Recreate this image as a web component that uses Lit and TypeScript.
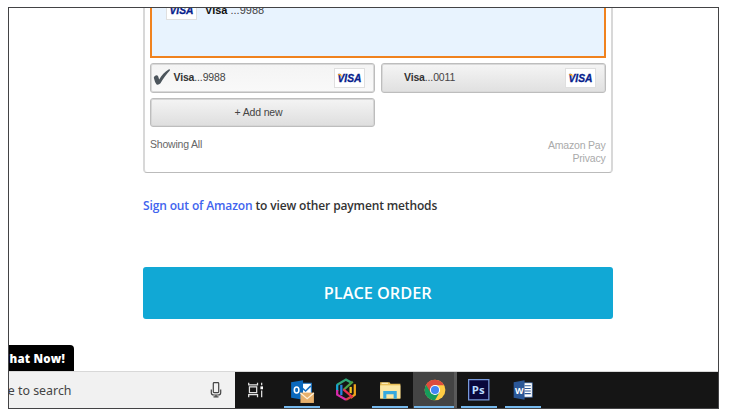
import { LitElement, html, svg, css } from "lit";
import { customElement, property } from "lit/decorators.js";

@customElement("visa-mark")
class VisaMark extends LitElement {
  static styles = css`
    :host { display: block; box-sizing: border-box; width: 31px; height: 20px; background: #fff; border: 1px solid #dfdfdf; }
    svg { display: block; width: 29px; height: 18px; }
    text { font: italic bold 11px "Liberation Sans", sans-serif; fill: #06218c; stroke: #06218c; stroke-width: .3px; }
  `;
  render() {
    return html`<svg viewBox="0 0 29 18">
      <text x="2.500" y="13" textLength="24" lengthAdjust="spacingAndGlyphs">VISA</text>
      <path d="M2.800 5h3.200l1.300 3.500Q6.300 6.500 2.800 5.600z" fill="#f5a31c" />
    </svg>`;
  }
}

@customElement("pay-option")
class PayOption extends LitElement {
  @property() number = "";
  @property({ type: Boolean, reflect: true }) selected = false;
  static styles = css`
    :host { box-sizing: border-box; display: flex; align-items: center; height: 29.500px; padding: 0 9px 0 2px; border: 1px solid #bdbdbd; border-radius: 3px; background: linear-gradient(#f5f5f5, #e0e0e0); box-shadow: inset 0 0 0 1px #d9d9d9; }
    :host([selected]) { background: linear-gradient(#f4f4f4, #f9f9f9); }
    .check { width: 18px; height: 17px; margin-right: 2.500px; }
    .label { flex: 1; font: 10.500px/14px "Liberation Sans", sans-serif; letter-spacing: -.15px; color: #444; padding-bottom: 1px; }
    b { color: #333; }
  `;
  render() {
    return html`
      <svg class="check" viewBox="0 0 18 18">
        ${this.selected
          ? svg`<path d="M.3 9.300Q.4 7.600 2.300 6.800q1.800-.6 2.700 1.100l1 3.200C8.500 7 12 3 16 .6q2-.7 1.300 1C13.500 5.500 10 10.500 7.400 15.200Q5.500 17 3.300 16.400 1.300 14 .3 9.300z" fill="#4c555c"/>`
          : ""}
      </svg>
      <span class="label"><b>Visa</b>...${this.number}</span>
      <visa-mark></visa-mark>`;
  }
}

const icons = {
  tasks: svg`<g fill="none" stroke="#e4e4e4" stroke-width="1.200"><path d="M5.500 6.500v2h8.500v-2M5.500 20.500v-2.500h8.500v2.500M6.200 10.500h7v5.500h-7zM18 6.500v2.500M18 14v6.500"/></g><path d="M16.800 10h2.500v2.800h-2.500z" fill="#fff"/>`,
  outlook: svg`<path d="M12 7h10.500v12H12z" fill="#fff" stroke="#1672c4"/><path d="m14 12 3 2.500 5-5" fill="none" stroke="#1672c4" stroke-width="1.500"/><path d="M3 6 14.500 4v19L3 21z" fill="#0b69bd"/><ellipse cx="8.300" cy="13.500" rx="2.200" ry="2.900" fill="none" stroke="#fff" stroke-width="1.500"/><path d="M12 16h13v10H12z" fill="#e7b06c"/><path d="m12 16.300 6.500 5.500 6.500-5.500" fill="none" stroke="#fff2da" stroke-width="1.200"/>`,
  k: svg`<g fill="none" stroke-width="2.200"><path d="M18 6 13.500 3.500 5 8.500" stroke="#31a878"/><path d="M5 8v6.500" stroke="#18a5d2"/><path d="M5 13.500V18l8.500 5" stroke="#d82bab"/><path d="M20 5.500 11 13.500" stroke="#4fa348"/><path d="M22 8V18l-4 3" stroke="#f0a51d"/><path d="m11 13 9 7.500" stroke="#e92f51"/><path d="M9 8.500v10" stroke="#2882de"/><path d="m13.500 23 5-3" stroke="#d94444"/><path d="M18 10.500v6" stroke="#f4c620"/></g>`,
  folder: svg`<path d="M4 6h9l1 1.500h9.500V22H4z" fill="#e9bf57"/><path d="M4 9h19.500v12.500H4z" fill="#fbe7a4"/><path d="M5.500 6.500h6v1h-6z" fill="#fff5d0"/><path d="M7 22v-7.500h13V22h-3v-4.500h-7V22z" fill="#36a9df"/>`,
  chrome: svg`<circle cx="13.500" cy="13.500" r="10" fill="#fc4"/><path d="M13.500 13.500 4.840 8.500A10 10 0 0 0 13.500 23.500l4.300-7.500z" fill="#169b5b"/><path d="M4.840 8.500A10 10 0 0 1 22.200 8.800H13.500l-4.300 7.200z" fill="#dc4c3e"/><circle cx="13.500" cy="13.500" r="4.900" fill="#fff"/><circle cx="13.500" cy="13.500" r="3.900" fill="#4285f4"/>`,
  ps: svg`<path d="M3.500 3.500h19.500v19.500H3.500z" fill="#09073c" stroke="#7899da" stroke-width="1.200"/><text x="6.500" y="17.300" class="ps">Ps</text>`,
  word: svg`<path d="M13 6.500h9.500v14H13z" fill="#fff" stroke="#2b5797" stroke-width=".7"/><path d="M15 9.500h6M15 12h6M15 14.500h6M15 17h6" stroke="#2b5797"/><path d="M4.500 6 15 4v19L4.500 21z" fill="#2b5797"/><text x="5.700" y="17" class="w">W</text>`,
};

@customElement("task-icon")
class TaskIcon extends LitElement {
  @property() icon: keyof typeof icons = "tasks";
  @property({ type: Boolean, reflect: true }) running = false;
  @property({ type: Boolean, reflect: true }) active = false;
  static styles = css`
    :host { display: flex; flex-direction: column; align-items: center; box-sizing: border-box; width: 44.300px; padding-top: 3.500px; }
    :host([active]) { background: linear-gradient(90deg, #444 41px, #5a5a5a 41px); }
    svg { width: 28px; height: 28px; flex: none; }
    .line { width: 36px; height: 2.500px; margin-top: 2px; }
    :host([running]) .line { background: #76b9ed; }
    :host([active]) .line { width: 40px; align-self: flex-start; margin-left: 1px; }
    .ps { font: bold 11px "Open Sans", sans-serif; fill: #b9daff; }
    .w { font: bold 8.500px "Open Sans", sans-serif; fill: #fff; }
  `;
  render() {
    return html`<svg viewBox="0 0 27 27">${icons[this.icon]}</svg><div class="line"></div>`;
  }
}

@customElement("app-root")
class AppRoot extends LitElement {
  static styles = css`
    :host { display: block; box-sizing: border-box; width: 729px; height: 418px; padding: 7px 0 0 8px; background: #fff; overflow: hidden; font-family: "Liberation Sans", sans-serif; }
    .frame { box-sizing: border-box; width: 711px; height: 402px; border: 1px solid #434345; overflow: hidden; display: flex; flex-direction: column; }
    .content { width: 469.500px; margin-left: 134px; height: 337px; flex: none; }
    .panel { box-sizing: border-box; height: 165px; padding: 0 5px; border: solid #d8d8d8; border-width: 0 2px 1px; border-bottom-color: #bbb; border-radius: 0 0 4px 4px; }
    .chosen { box-sizing: border-box; height: 50px; border: 2px solid #f0821e; border-top: 0; background: #e8f3fe; display: flex; align-items: flex-start; padding-left: 14px; overflow: hidden; }
    .chosen visa-mark { margin-top: -8px; }
    .chosen span { font-size: 11px; line-height: 14px; margin: -5px 0 0 8px; color: #444; }
    .chosen b { color: #111; }
    .options { display: grid; grid-template-columns: 225px 225px; column-gap: 5.500px; row-gap: 5px; margin-top: 5px; }
    .add { box-sizing: border-box; height: 29px; display: flex; align-items: center; justify-content: center; padding: 0 8px 0 0; border: 1px solid #bdbdbd; border-radius: 3px; background: linear-gradient(#f4f4f4, #dedede); box-shadow: inset 0 0 0 1px #d6d6d6; font-size: 10.500px; line-height: 13px; letter-spacing: -.15px; color: #444; }
    .foot { display: flex; justify-content: space-between; margin-top: 11px; font-size: 10.500px; letter-spacing: -.2px; line-height: 13.500px; color: #666; }
    .links { text-align: right; color: #aaa; padding-top: 1px; }
    .signout { margin-top: 23px; height: 20px; font: 600 12px/20px "Open Sans", sans-serif; letter-spacing: -.14px; color: #333; white-space: nowrap; }
    .signout a { color: #4164ee; }
    .order { margin-top: 51px; height: 52.400px; display: flex; align-items: center; justify-content: center; border-radius: 3px; background: #11a8d5; color: #fff; font: 600 16.300px "Open Sans", sans-serif; }
    .chat { box-sizing: border-box; flex: none; width: 65px; height: 27px; padding-right: 9px; display: flex; justify-content: flex-end; overflow: hidden; white-space: nowrap; background: #000; border-radius: 0 4px 0 0; color: #fff; font: 800 11.500px/27px "Open Sans", sans-serif; letter-spacing: .2px; }
    .taskbar { display: flex; height: 36px; background: #151515; box-shadow: 0 -1px #d8d8d8; flex: none; }
    .search { box-sizing: border-box; width: 225.500px; background: #f1f1f1; display: flex; justify-content: space-between; overflow: hidden; padding-right: 12px; font: 12.400px/37px "Noto Sans", sans-serif; color: #444; white-space: nowrap; }
    .query { width: 62.500px; display: flex; justify-content: flex-end; overflow: hidden; }
    .mic { width: 14px; height: 18px; margin-top: 9px; }
    task-icon:nth-of-type(1) { width: 45.200px; }
  `;
  render() {
    return html`<div class="frame">
      <main class="content">
        <section class="panel">
          <div class="chosen"><visa-mark></visa-mark><span><b>Visa</b> ...9988</span></div>
          <div class="options">
            <pay-option number="9988" selected></pay-option>
            <pay-option number="0011"></pay-option>
            <div class="add">+ Add new</div>
          </div>
          <div class="foot"><span>Showing All</span><div class="links">Amazon Pay<br />Privacy</div></div>
        </section>
        <div class="signout"><a>Sign out of Amazon</a> to view other payment methods</div>
        <div class="order">PLACE ORDER</div>
      </main>
      <div class="chat">Chat Now!</div>
      <footer class="taskbar">
        <div class="search">
          <span class="query">Type here to search</span>
          <svg class="mic" viewBox="0 0 14 18"><g fill="none" stroke="#444" stroke-width="1.200"><rect x="4.300" y="1.600" width="5.400" height="10" rx=".8"/><path d="M2.300 8.500v3.200q0 2.300 2.700 2.300h4q2.700 0 2.700-2.300V8.500M7 14v2M4.500 15.800h5"/></g></svg>
        </div>
        <task-icon icon="tasks"></task-icon>
        <task-icon icon="outlook" running></task-icon>
        <task-icon icon="k"></task-icon>
        <task-icon icon="folder" running></task-icon>
        <task-icon icon="chrome" running active></task-icon>
        <task-icon icon="ps" running></task-icon>
        <task-icon icon="word" running></task-icon>
      </footer>
    </div>`;
  }
}
